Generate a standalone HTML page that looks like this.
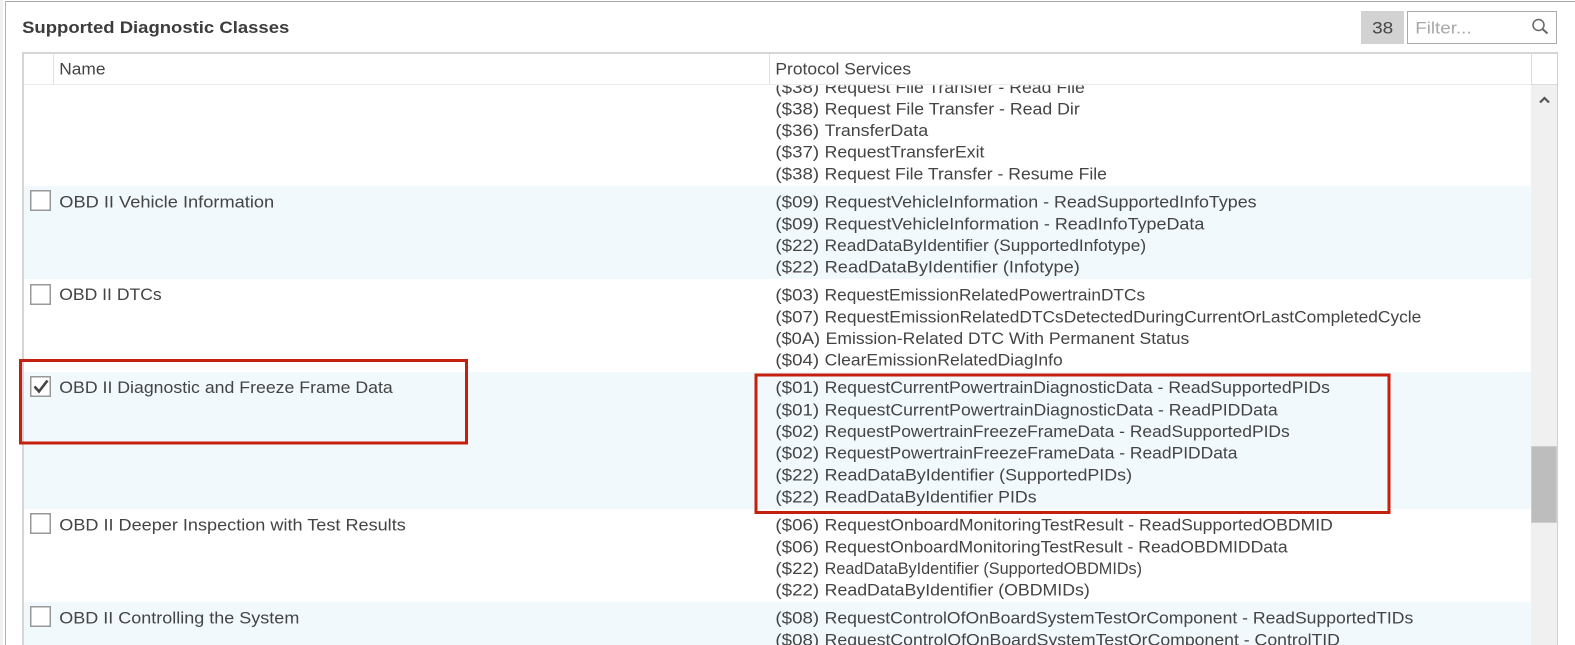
<!DOCTYPE html>
<html>
<head>
<meta charset="utf-8">
<style>
html,body{margin:0;padding:0;background:#fff;width:1575px;height:645px;overflow:hidden}
svg{display:block}
text{font-family:"Liberation Sans",sans-serif;font-size:17px;fill:#444}
</style>
</head>
<body>
<svg width="1575" height="645" viewBox="0 0 1575 645" xmlns="http://www.w3.org/2000/svg">
<defs><clipPath id="c"><rect x="0" y="85" width="1575" height="560"/></clipPath></defs>
<rect x="0" y="0" width="3" height="645" fill="#f1f1f1"/>
<rect x="5" y="1" width="1570" height="1" fill="#a6a6a6"/>
<rect x="5" y="1" width="1" height="644" fill="#b5b5b5"/>

<rect x="24" y="186" width="1507" height="93" fill="#f2f9fd"/>
<rect x="24" y="372" width="1507" height="137" fill="#f2f9fd"/>
<rect x="24" y="602" width="1507" height="43" fill="#f2f9fd"/>

<rect x="22" y="52" width="1536" height="2" fill="#d6d6d6"/>
<rect x="22" y="52" width="2" height="593" fill="#d6d6d6"/>
<rect x="1557" y="52" width="1" height="593" fill="#d0d0d0"/>
<rect x="24" y="84" width="1507" height="1" fill="#ebebeb"/>
<rect x="53" y="54" width="1" height="30" fill="#e2e2e2"/>
<rect x="769" y="54" width="1" height="30" fill="#e2e2e2"/>
<rect x="1531" y="54" width="1" height="31" fill="#dcdcdc"/>
<rect x="1531" y="85" width="26" height="560" fill="#f0f0f0"/>
<rect x="1531" y="84" width="26" height="1" fill="#dcdcdc"/>
<rect x="1531.5" y="446.5" width="25" height="76" fill="#bdbdbd" stroke="#cdcdcd"/>
<path d="M1540 102.5L1544.5 98L1549 102.5" fill="none" stroke="#555" stroke-width="2.2"/>

<rect x="1361" y="11" width="43" height="33" fill="#d2d2d2"/>
<rect x="1407.5" y="11.5" width="149" height="32" fill="#fff" stroke="#ababab"/>
<circle cx="1538.5" cy="25" r="5.5" fill="none" stroke="#666" stroke-width="1.5"/>
<path d="M1542.5 29L1547.5 33.5" fill="none" stroke="#666" stroke-width="2"/>

<g fill="#fff" stroke="#999" stroke-width="1.5">
<rect x="30.75" y="190.75" width="19.5" height="19.5"/>
<rect x="30.75" y="284.75" width="19.5" height="19.5"/>
<rect x="30.75" y="376.75" width="19.5" height="19.5"/>
<rect x="30.75" y="513.75" width="19.5" height="19.5"/>
<rect x="30.75" y="606.75" width="19.5" height="19.5"/>
</g>
<path d="M34.5 386.5L39 391.5L47.5 380.5" fill="none" stroke="#444" stroke-width="2.6"/>

<g transform="scale(1.00446)">
<text x="22" y="33" textLength="266" lengthAdjust="spacingAndGlyphs" style="font-weight:700;fill:#3c3c3c">Supported Diagnostic Classes</text>
<text x="59" y="74" textLength="46" lengthAdjust="spacingAndGlyphs">Name</text>
<text x="772" y="74" textLength="135" lengthAdjust="spacingAndGlyphs">Protocol Services</text>
<text x="1366" y="33.5" textLength="21" lengthAdjust="spacingAndGlyphs">38</text>
<text x="1409" y="33.5" textLength="56" lengthAdjust="spacingAndGlyphs" style="fill:#a8a8a8">Filter...</text>

<text x="59" y="206.5" textLength="214" lengthAdjust="spacingAndGlyphs">OBD II Vehicle Information</text>
<text x="59" y="298.5" textLength="102" lengthAdjust="spacingAndGlyphs">OBD II DTCs</text>
<text x="59" y="391.5" textLength="332" lengthAdjust="spacingAndGlyphs">OBD II Diagnostic and Freeze Frame Data</text>
<text x="59" y="528" textLength="345" lengthAdjust="spacingAndGlyphs">OBD II Deeper Inspection with Test Results</text>
<text x="59" y="620.5" textLength="239" lengthAdjust="spacingAndGlyphs">OBD II Controlling the System</text>

<g clip-path="url(#c)">
<text x="772" y="92.5" textLength="43.5" lengthAdjust="spacingAndGlyphs">($38)</text>
<text x="821" y="92.5" textLength="259" lengthAdjust="spacingAndGlyphs">Request File Transfer - Read File</text>
</g>
<text x="772" y="114" textLength="43.5" lengthAdjust="spacingAndGlyphs">($38)</text>
<text x="821" y="114" textLength="254" lengthAdjust="spacingAndGlyphs">Request File Transfer - Read Dir</text>
<text x="772" y="135.5" textLength="43.5" lengthAdjust="spacingAndGlyphs">($36)</text>
<text x="821" y="135.5" textLength="103" lengthAdjust="spacingAndGlyphs">TransferData</text>
<text x="772" y="157" textLength="43.5" lengthAdjust="spacingAndGlyphs">($37)</text>
<text x="821" y="157" textLength="159" lengthAdjust="spacingAndGlyphs">RequestTransferExit</text>
<text x="772" y="178.5" textLength="43.5" lengthAdjust="spacingAndGlyphs">($38)</text>
<text x="821" y="178.5" textLength="281" lengthAdjust="spacingAndGlyphs">Request File Transfer - Resume File</text>

<text x="772" y="206.5" textLength="43.5" lengthAdjust="spacingAndGlyphs">($09)</text>
<text x="821" y="206.5" textLength="430" lengthAdjust="spacingAndGlyphs">RequestVehicleInformation - ReadSupportedInfoTypes</text>
<text x="772" y="228.5" textLength="43.5" lengthAdjust="spacingAndGlyphs">($09)</text>
<text x="821" y="228.5" textLength="378" lengthAdjust="spacingAndGlyphs">RequestVehicleInformation - ReadInfoTypeData</text>
<text x="772" y="250" textLength="43.5" lengthAdjust="spacingAndGlyphs">($22)</text>
<text x="821" y="250" textLength="320" lengthAdjust="spacingAndGlyphs">ReadDataByIdentifier (SupportedInfotype)</text>
<text x="772" y="271.5" textLength="43.5" lengthAdjust="spacingAndGlyphs">($22)</text>
<text x="821" y="271.5" textLength="254" lengthAdjust="spacingAndGlyphs">ReadDataByIdentifier (Infotype)</text>

<text x="772" y="299" textLength="43.5" lengthAdjust="spacingAndGlyphs">($03)</text>
<text x="821" y="299" textLength="319" lengthAdjust="spacingAndGlyphs">RequestEmissionRelatedPowertrainDTCs</text>
<text x="772" y="321" textLength="43.5" lengthAdjust="spacingAndGlyphs">($07)</text>
<text x="821" y="321" textLength="594" lengthAdjust="spacingAndGlyphs">RequestEmissionRelatedDTCsDetectedDuringCurrentOrLastCompletedCycle</text>
<text x="772" y="342.5" textLength="44.5" lengthAdjust="spacingAndGlyphs">($0A)</text>
<text x="822" y="342.5" textLength="362" lengthAdjust="spacingAndGlyphs">Emission-Related DTC With Permanent Status</text>
<text x="772" y="364" textLength="43.5" lengthAdjust="spacingAndGlyphs">($04)</text>
<text x="821" y="364" textLength="237" lengthAdjust="spacingAndGlyphs">ClearEmissionRelatedDiagInfo</text>

<text x="772" y="391.5" textLength="43.5" lengthAdjust="spacingAndGlyphs">($01)</text>
<text x="821" y="391.5" textLength="503" lengthAdjust="spacingAndGlyphs">RequestCurrentPowertrainDiagnosticData - ReadSupportedPIDs</text>
<text x="772" y="413.5" textLength="43.5" lengthAdjust="spacingAndGlyphs">($01)</text>
<text x="821" y="413.5" textLength="451" lengthAdjust="spacingAndGlyphs">RequestCurrentPowertrainDiagnosticData - ReadPIDData</text>
<text x="772" y="435" textLength="43.5" lengthAdjust="spacingAndGlyphs">($02)</text>
<text x="821" y="435" textLength="463" lengthAdjust="spacingAndGlyphs">RequestPowertrainFreezeFrameData - ReadSupportedPIDs</text>
<text x="772" y="456.5" textLength="43.5" lengthAdjust="spacingAndGlyphs">($02)</text>
<text x="821" y="456.5" textLength="411" lengthAdjust="spacingAndGlyphs">RequestPowertrainFreezeFrameData - ReadPIDData</text>
<text x="772" y="478.5" textLength="43.5" lengthAdjust="spacingAndGlyphs">($22)</text>
<text x="821" y="478.5" textLength="306" lengthAdjust="spacingAndGlyphs">ReadDataByIdentifier (SupportedPIDs)</text>
<text x="772" y="500.5" textLength="43.5" lengthAdjust="spacingAndGlyphs">($22)</text>
<text x="821" y="500.5" textLength="211" lengthAdjust="spacingAndGlyphs">ReadDataByIdentifier PIDs</text>

<text x="772" y="528" textLength="43.5" lengthAdjust="spacingAndGlyphs">($06)</text>
<text x="821" y="528" textLength="506" lengthAdjust="spacingAndGlyphs">RequestOnboardMonitoringTestResult - ReadSupportedOBDMID</text>
<text x="772" y="550" textLength="43.5" lengthAdjust="spacingAndGlyphs">($06)</text>
<text x="821" y="550" textLength="461" lengthAdjust="spacingAndGlyphs">RequestOnboardMonitoringTestResult - ReadOBDMIDData</text>
<text x="772" y="571.5" textLength="43.5" lengthAdjust="spacingAndGlyphs">($22)</text>
<text x="821" y="571.5" textLength="316" lengthAdjust="spacingAndGlyphs">ReadDataByIdentifier (SupportedOBDMIDs)</text>
<text x="772" y="593" textLength="43.5" lengthAdjust="spacingAndGlyphs">($22)</text>
<text x="821" y="593" textLength="264" lengthAdjust="spacingAndGlyphs">ReadDataByIdentifier (OBDMIDs)</text>

<text x="772" y="620.5" textLength="43.5" lengthAdjust="spacingAndGlyphs">($08)</text>
<text x="821" y="620.5" textLength="586" lengthAdjust="spacingAndGlyphs">RequestControlOfOnBoardSystemTestOrComponent - ReadSupportedTIDs</text>
<text x="772" y="642.5" textLength="43.5" lengthAdjust="spacingAndGlyphs">($08)</text>
<text x="821" y="642.5" textLength="513" lengthAdjust="spacingAndGlyphs">RequestControlOfOnBoardSystemTestOrComponent - ControlTID</text>
</g>

<rect x="20.5" y="360.5" width="446" height="82.5" fill="none" stroke="#c5200e" stroke-width="3"/>
<rect x="756" y="375" width="633" height="137.5" fill="none" stroke="#c5200e" stroke-width="3"/>
</svg>
</body>
</html>
